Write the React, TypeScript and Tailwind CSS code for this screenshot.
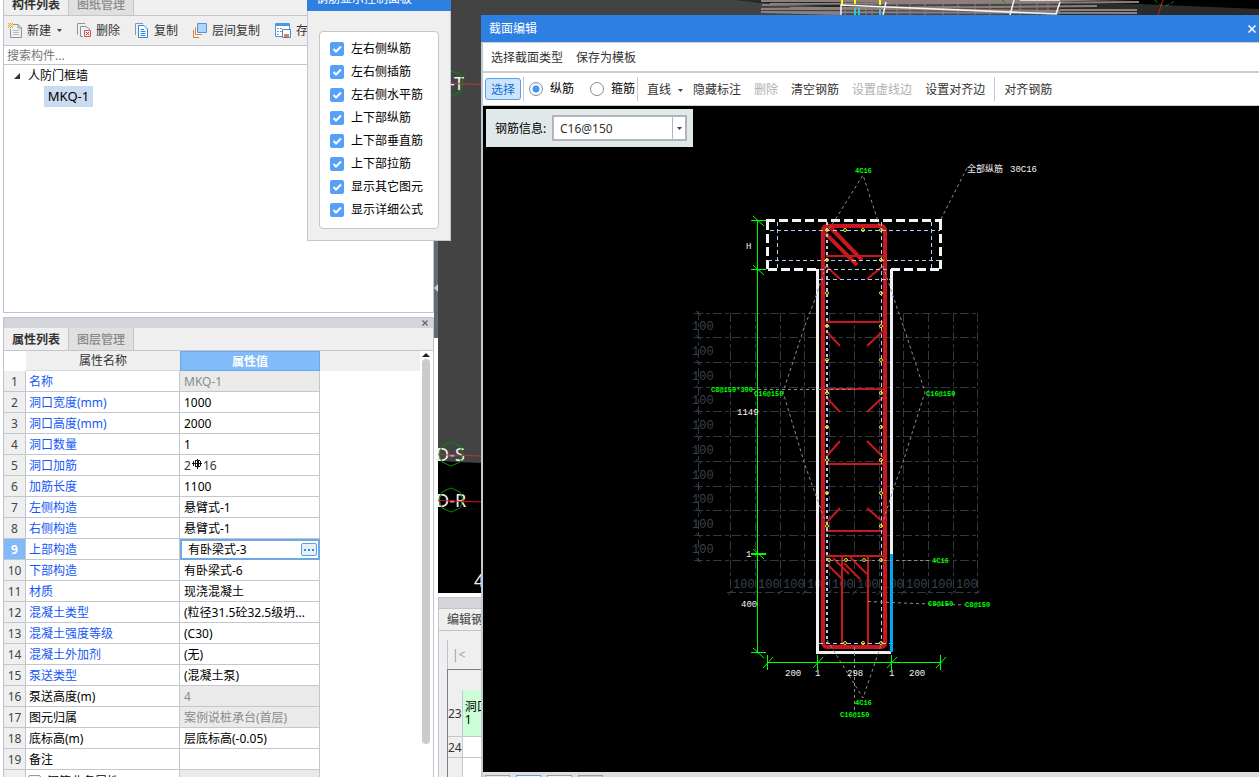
import { useState } from "react";
import type { ReactNode } from "react";
import clsx from "clsx";

interface PropertyRow {
  name: string;
  value: ReactNode;
  common?: boolean;
  readOnly?: boolean;
}

const RebarSymbol = () => (
  <svg className="mx-px inline-block h-[11px] w-[10px] align-baseline" viewBox="0 0 10 11" fill="none" stroke="#111" aria-hidden="true">
    <path d="M2.5 1.5H7.5M2.5 7.5H7.5M1.5 2V7M8.5 2V7M5 0V10M0 4.5H10M3.5 2V7M6.5 2V7" shapeRendering="crispEdges" />
  </svg>
);

const properties: PropertyRow[] = [
  { name: "名称", value: "MKQ-1", common: true, readOnly: true },
  { name: "洞口宽度(mm)", value: "1000", common: true },
  { name: "洞口高度(mm)", value: "2000", common: true },
  { name: "洞口数量", value: "1", common: true },
  { name: "洞口加筋", value: <span className="text-[#333]">2<RebarSymbol />16</span>, common: true },
  { name: "加筋长度", value: "1100", common: true },
  { name: "左侧构造", value: "悬臂式-1", common: true },
  { name: "右侧构造", value: "悬臂式-1", common: true },
  { name: "上部构造", value: "有卧梁式-3", common: true },
  { name: "下部构造", value: "有卧梁式-6", common: true },
  { name: "材质", value: "现浇混凝土", common: true },
  { name: "混凝土类型", value: "(粒径31.5砼32.5级坍...", common: true },
  { name: "混凝土强度等级", value: "(C30)", common: true },
  { name: "混凝土外加剂", value: "(无)", common: true },
  { name: "泵送类型", value: "(混凝土泵)", common: true },
  { name: "泵送高度(m)", value: "4", readOnly: true },
  { name: "图元归属", value: "案例说桩承台(首层)", readOnly: true },
  { name: "底标高(m)", value: "层底标高(-0.05)" },
  { name: "备注", value: "" },
];

const displayOptions = [
  "左右侧纵筋",
  "左右侧插筋",
  "左右侧水平筋",
  "上下部纵筋",
  "上下部垂直筋",
  "上下部拉筋",
  "显示其它图元",
  "显示详细公式",
];

/* ---------- Left toolbar icons ---------- */

const NewIcon = () => (
  <svg className="h-[15px] w-[14px]" viewBox="0 0 14 15" fill="none" aria-hidden="true">
    <path d="M5 1.5H10L13.5 5V14.5H2.5V6" stroke="#8a959c" />
    <path d="M10 1.5V5H13.5" stroke="#8a959c" />
    <path d="M5 7.5H11M5 9.5H11M5 11.5H11" stroke="#b7bfc5" />
    <path d="M0 0.5H1M2 0.5H3M4 0.5H5M1 1.5H2M3 1.5H4M0 2.5H1M2 2.5H3M4 2.5H5M1 3.5H2M3 3.5H4M0 4.5H1M2 4.5H3M4 4.5H5" stroke="#f0a020" />
  </svg>
);

const DeleteIcon = () => (
  <svg className="h-[15px] w-[14px]" viewBox="0 0 14 15" fill="none" aria-hidden="true">
    <path d="M0.5 11.5V0.5H8" stroke="#8a959c" />
    <path d="M6 13.5H3.5V3.5H9L12.5 6V7" stroke="#8a959c" />
    <path d="M7.5 7.5H13.5V13.5H7.5Z" stroke="#d9534f" />
    <path d="M9 9L12 12M12 9L9 12" stroke="#d02f2f" />
  </svg>
);

const CopyIcon = () => (
  <svg className="h-[15px] w-[14px]" viewBox="0 0 14 15" fill="none" aria-hidden="true">
    <path d="M0.5 12V0.5H8" stroke="#8a959c" />
    <path d="M3.5 2.5H9L12.5 6V14.5H3.5Z" stroke="#2e86e0" fill="#fff" />
    <path d="M5.5 6.5H9M5.5 8.5H10.5M5.5 10.5H10.5M5.5 12.5H10.5" stroke="#2e86e0" />
  </svg>
);

const LayerCopyIcon = () => (
  <svg className="h-[15px] w-[14px]" viewBox="0 0 14 15" fill="none" aria-hidden="true">
    <path d="M4.5 0.5H13.5V9.5H4.5Z" stroke="#4a97e8" fill="#b3d4fa" />
    <path d="M3 4.5H2.5V11.5H9" stroke="#e0893c" />
    <path d="M0.5 7V14.5H6" stroke="#e0793c" />
  </svg>
);

const SaveIcon = () => (
  <svg className="h-[15px] w-[16px]" viewBox="0 0 16 15" fill="none" aria-hidden="true">
    <path d="M0.5 0.5H14.5V13.5H0.5Z" fill="#fff" stroke="#4a97e8" />
    <path d="M0 1.5H15M0 2.5H15" stroke="#4a97e8" />
    <path d="M2 5.5H4M5 5.5H7M2 8.5H4M5 8.5H7M2 11.5H4" stroke="#8a959c" />
    <path d="M7.5 6.5H15.5V14.5H7.5Z" fill="#fff" stroke="#4a86c8" />
    <path d="M9 11H14V14H9Z" fill="#e8813c" />
  </svg>
);

const Caret = ({ className }: { className?: string }) => (
  <svg className={clsx("h-[3px] w-[5px]", className)} viewBox="0 0 5 3" aria-hidden="true">
    <path d="M0 0H5L2.5 3Z" fill="#444" />
  </svg>
);

function Tabs({ items }: { items: string[] }) {
  return (
    <div className="flex items-end overflow-hidden border-b border-[#c3c6cc] bg-[#efefef]">
      {items.map((item, i) => (
        <button
          key={item}
          className={clsx(
            "h-[22px] w-[65px] shrink-0 border-r border-[#c3c6cc] pt-[2px] text-center leading-[20px]",
            i === 0 ? "font-bold text-[#333]" : "bg-[#e0e0e0] font-medium text-[#8a8a8a]"
          )}
        >
          {item}
        </button>
      ))}
    </div>
  );
}

function ComponentList() {
  return (
    <section className="flex h-[313px] shrink-0 flex-col border-x border-b border-[#c0c4cc] bg-white">
      <div className="flex h-[16px] shrink-0 flex-col justify-end overflow-hidden">
        <Tabs items={["构件列表", "图纸管理"]} />
      </div>
      <div className="flex h-[30px] shrink-0 items-center gap-[15px] border-b border-[#c0c4cc] bg-[#efefef] pl-1 text-[#333]">
        <button className="flex items-center gap-[5px] whitespace-nowrap">
          <NewIcon />
          新建
          <Caret className="ml-px" />
        </button>
        <button className="flex items-center gap-[5px] whitespace-nowrap"><DeleteIcon />删除</button>
        <button className="flex items-center gap-[5px] whitespace-nowrap"><CopyIcon />复制</button>
        <button className="flex items-center gap-[5px] whitespace-nowrap"><LayerCopyIcon />层间复制</button>
        <button className="flex items-center gap-[5px] whitespace-nowrap"><SaveIcon />存档</button>
      </div>
      <input
        aria-label="搜索构件"
        placeholder="搜索构件..."
        className="h-[19px] shrink-0 border-b border-[#c0c4cc] px-[3px] outline-none placeholder:text-[#777]"
      />
      <ul className="leading-[21px] text-black">
        <li>
          <div className="flex items-center gap-2 pl-[10px]">
            <svg className="h-[6px] w-[6px]" viewBox="0 0 6 6" aria-hidden="true">
              <path d="M6 0V6H0Z" fill="#333" />
            </svg>
            人防门框墙
          </div>
          <div className="ml-10 w-[49px] bg-[#c9daf1] text-center text-[13px]">MKQ-1</div>
        </li>
      </ul>
    </section>
  );
}

function PropertyTable() {
  const active = 8;
  return (
    <table className="w-[416px] shrink-0 table-fixed border-separate border-spacing-0 self-start">
      <colgroup>
        <col className="w-[22px]" />
        <col className="w-[154px]" />
        <col className="w-[140px]" />
        <col className="w-[100px]" />
      </colgroup>
      <thead>
        <tr className="h-[20px]">
          <th className="bg-white p-0" aria-label="序号" />
          <th className="border-b border-[#d5d8dc] bg-[#efefef] p-0 pt-px leading-[18px] font-normal text-[#333]">属性名称</th>
          <th className="border border-[#6ca9ec] bg-[#82bbfa] p-0 pt-px leading-[17px] font-bold text-white">属性值</th>
          <th className="bg-[#efefef] p-0" aria-label="附加" />
        </tr>
      </thead>
      <tbody>
        {properties.map((row, i) => (
          <tr key={row.name} className="h-[21px] leading-[18px] whitespace-nowrap">
            <td
              className={clsx(
                "border-r border-b border-[#c3c6cc] p-0 pt-[2px] text-center",
                i === active ? "bg-[#82b9f9] font-bold text-white" : "bg-[#efefef] text-[#444]"
              )}
            >
              {i + 1}
            </td>
            <td className={clsx("border-r border-b border-[#c3c6cc] p-0 pt-[2px] pl-[3px]", row.common ? "text-[#1458f5]" : "text-black")}>
              {row.name}
            </td>
            {i === active ? (
              <td className="border-2 border-[#6ca7e6] p-0">
                <div className="flex h-[17px] items-center">
                  <input
                    aria-label={row.name}
                    defaultValue={row.value as string}
                    className="h-[17px] min-w-0 flex-1 pt-px pl-[6px] text-black outline-none"
                  />
                  <button
                    aria-label="更多"
                    className="mr-px flex h-[13px] w-[16px] items-center justify-center gap-[2px] rounded-[2px] border border-[#5b9fe0] bg-[#e8f1fb]"
                  >
                    <span className="size-[2px] bg-[#3d88d4]" />
                    <span className="size-[2px] bg-[#3d88d4]" />
                    <span className="size-[2px] bg-[#3d88d4]" />
                  </button>
                </div>
              </td>
            ) : (
              <td
                className={clsx(
                  "overflow-hidden border-r border-b border-[#c3c6cc] p-0 pt-[2px] pl-1",
                  row.readOnly ? "bg-[#eaeaea] text-[#8a8a8a]" : "text-black"
                )}
              >
                {row.value}
              </td>
            )}
            <td className="p-0" />
          </tr>
        ))}
        <tr className="h-[21px] leading-[18px]">
          <td className="border-r border-[#c3c6cc] bg-[#efefef] p-0 pt-[2px] text-center text-[#444]">20</td>
          <td className="border-r border-[#c3c6cc] p-0 pt-[2px]">
            <button className="flex items-center gap-[6px] pl-[2px] text-black">
              <span className="flex size-[13px] items-center justify-center rounded-[2px] border border-[#999] bg-[#f4f4f4] leading-[10px]">+</span>
              钢筋业务属性
            </button>
          </td>
          <td className="border-r border-[#c3c6cc] bg-[#eaeaea] p-0" />
          <td className="p-0" />
        </tr>
      </tbody>
    </table>
  );
}

function PropertyPanel() {
  return (
    <section className="mt-1 flex min-h-0 flex-1 flex-col border-x border-[#c0c4cc] bg-white">
      <header className="flex h-[11px] shrink-0 items-center justify-end border-t border-[#c0c4cc] bg-[#d4d5da] pr-[5px]">
        <button aria-label="关闭">
          <svg className="h-[6px] w-[6px]" viewBox="0 0 6 6" aria-hidden="true">
            <path d="M0.5 0.5L5.5 5.5M5.5 0.5L0.5 5.5" stroke="#666" strokeWidth="1.3" />
          </svg>
        </button>
      </header>
      <Tabs items={["属性列表", "图层管理"]} />
      <div className="flex min-h-0 flex-1 overflow-hidden">
        <PropertyTable />
        <div className="flex flex-1 flex-col items-center gap-[2px] pt-[2px] pr-[2px]">
          <svg className="h-[4px] w-[8px]" viewBox="0 0 8 4" aria-hidden="true">
            <path d="M0 4L4 0L8 4Z" fill="#222" />
          </svg>
          <div className="h-[385px] w-2 rounded-full bg-[#cbcbcb]" />
        </div>
      </div>
    </section>
  );
}

/* 3D view behind the dialogs, drawn in window coordinates */
function SceneView() {
  return (
    <svg className="size-full bg-[#434343]" aria-hidden="true">
      <g transform="translate(-438 0)">
        <path d="M438 461L482 463V700H438Z" fill="#000" />
        <path d="M960 0H1259V15H960Z" fill="#2b2b2b" />
        <path d="M1065 0H1259V9L1139 4L1065 2Z" fill="#000" />
        <path d="M735 0L840 2V8L761 3Z" fill="#242424" />
        <path d="M840 0H1060V15H840Z" fill="#4a4442" />
        <g stroke="#8c807d" strokeWidth="2">
          <path d="M761 1H1060M762 5L1137 -1M770 4L1139 2M761 9L960 7M765 12L1137 13M808 9L1097 6M790 8L1060 11M761 12L840 14M1060 10H1137" />
          <path d="M845 0V15M866 0V15M872 0V15M897 0V15M910 0V15M925 0V15M943 0V15M958 0V15M975 0V15M990 0V15M1020 0V15M1037 0V15M1048 0V15" strokeWidth="1" />
        </g>
        <path d="M842 0V5M855 0V4M880 0V5" stroke="#ffff00" strokeWidth="2" />
        <path d="M855 8V15M859 8V15M880 9V15" stroke="#2ad0c8" strokeWidth="2" />
        <path d="M841 15V5L1057 14M886 2L883 15M1014 0L1010 15M1060 2L1056 14M1020 0H1060" fill="none" stroke="#f5f5f5" strokeWidth="1.5" />
        <path d="M1155 0Q1158 5 1165 6Q1172 4 1175 0M1002 0L1006 3" fill="none" stroke="#118a11" strokeDasharray="4 2" />
        <path d="M1163 0L1158 15" stroke="#d01818" />
        <g fill="#f0f0f0" fontFamily="Noto Sans, sans-serif" fontSize="18">
          <text x="449" y="90">-T</text>
          <text x="436" y="461">D-S</text>
          <text x="436" y="507">D-R</text>
          <text x="474" y="587">4</text>
        </g>
        <g fill="none" stroke="#0c8a0c">
          <path d="M451 71L460 74L463 83L460 92L451 96" />
          <path d="M451 442L460 446L463 454L460 462L451 466L442 462L439 454L442 446Z" />
          <path d="M451 488L460 492L463 500L460 508L451 512L442 508L439 500L442 492Z" />
        </g>
        <path d="M451 83.5L482 84.5M438 454.5L482 456" stroke="#b03838" />
        <path d="M438 500.5L482 502" stroke="#e01010" />
      </g>
    </svg>
  );
}

function RebarEditor() {
  return (
    <section className="flex h-[180px] shrink-0 flex-col border-l border-[#c0c4cc] bg-[#efefef]">
      <header className="h-[12px] shrink-0 border-y border-[#c0c4cc] bg-[#d4d5da]" />
      <h2 className="h-[22px] shrink-0 border-b border-[#c0c4cc] pl-2 leading-[22px] font-medium text-[#555]">编辑钢筋</h2>
      <div className="mt-[9px] ml-2 flex min-h-0 flex-1 flex-col">
        <div className="flex h-[29px] shrink-0 items-center gap-4 border-l border-[#c0c4cc] pl-1 text-[#999]">
          <button>|&lt;</button>
          <button>&lt;</button>
        </div>
        <table className="table-fixed border-separate border-spacing-0 border-t border-l border-[#7a7e8a] bg-white">
          <colgroup>
            <col className="w-[14px]" />
            <col />
          </colgroup>
          <thead>
            <tr className="h-[20px] bg-[#efefef]">
              <th className="p-0" aria-label="序号" />
              <th className="p-0" aria-label="筋号" />
            </tr>
          </thead>
          <tbody className="text-[#333]">
            <tr className="h-[47px]">
              <td className="border-r border-b border-[#c3c6cc] bg-[#efefef] p-0 pt-[2px]">23</td>
              <td className="border-b border-[#c3c6cc] bg-[#ccffd8] p-0 pl-[2px] leading-[13px] text-black">
                <div>洞口加强筋</div>
                <div>1</div>
              </td>
            </tr>
            <tr className="h-[21px]">
              <td className="border-r border-b border-[#c3c6cc] bg-[#efefef] p-0 pt-[2px]">24</td>
              <td className="border-b border-[#c3c6cc] p-0" />
            </tr>
            <tr className="h-[20px]">
              <td className="border-r border-[#c3c6cc] bg-[#efefef] p-0" />
              <td className="p-0" />
            </tr>
          </tbody>
        </table>
      </div>
    </section>
  );
}

function DisplayPanel() {
  return (
    <aside className="absolute -top-[15px] left-[307px] w-[144px] border border-[#c0c6d2] bg-[#efefef]">
      <h2 className="-mx-px -mt-px h-[26px] bg-[#2d80e2] pl-[9px] leading-[27px] text-white">钢筋显示控制面板</h2>
      <div className="mx-[11px] mt-5 mb-[11px] rounded-[4px] border border-[#c3c6cc] bg-white pt-[5px] pb-[7px] pl-[10px]">
        {displayOptions.map((option) => (
          <label key={option} className="flex h-[23px] items-center gap-[7px] text-black">
            <span className="relative flex size-[14px]">
              <input type="checkbox" defaultChecked className="peer size-[14px] appearance-none rounded-[2px] border border-[#56a0f8] checked:bg-[#56a0f8]" />
              <svg className="pointer-events-none absolute inset-0 hidden peer-checked:block" viewBox="0 0 14 14" fill="none" aria-hidden="true">
                <path d="M3.5 7L6 9.5L11 4.5" stroke="#fff" strokeWidth="2" />
              </svg>
            </span>
            <span className="pt-px">{option}</span>
          </label>
        ))}
      </div>
    </aside>
  );
}

/* ---------- Section drawing ---------- */

const gridX = [730, 755, 780, 804, 829, 854, 879, 903, 928, 953, 977];
const gridY = [313, 337, 362, 387, 411, 436, 461, 486, 510, 535, 560];
const barY = [260, 293, 326, 360, 393, 427, 460, 493, 526];
const bars: [number, number][] = [
  [827, 230], [845, 230], [863, 230], [881, 230],
  ...barY.flatMap((y): [number, number][] => [[827, y], [881, y]]),
  [829, 560], [846, 560], [864, 560], [881, 560],
  [845, 643], [863, 643], [881, 643],
];

const dimLabels: [number, number, string][] = [
  [746, 249, "H"],
  [737, 415, "1149"],
  [746, 557, "1"],
  [741, 607, "400"],
  [785, 676, "200"],
  [815, 676, "1"],
  [847, 676, "298"],
  [889, 676, "1"],
  [909, 676, "200"],
  [967, 172, "全部纵筋"],
  [1010, 172, "30C16"],
];

const barLabels: [number, number, string][] = [
  [855, 173, "4C16"],
  [711, 392, "C8@150*300"],
  [754, 396, "C16@150"],
  [926, 396, "C16@150"],
  [932, 563, "4C16"],
  [928, 606, "C8@150"],
  [965, 607, "C8@150"],
  [855, 705, "4C16"],
  [840, 717, "C16@150"],
];

function SectionDrawing() {
  return (
    <svg className="size-full" role="img" aria-label="截面图">
      <g transform="translate(-483 -106)" fill="none">
        {/* reference grid */}
        <g stroke="#303843" strokeDasharray="9 3 4 3" shapeRendering="crispEdges">
          {gridX.map((x) => <path key={x} d={`M${x}.5 313V592`} />)}
          {gridY.map((y) => <path key={y} d={`M694 ${y}.5H978`} />)}
          <path d="M698.5 311V562M727 592.5H979" />
        </g>
        <g stroke="#303843">
          {gridX.map((x) => <path key={x} d={`M${x - 2} 595L${x + 3} 590`} />)}
          {gridY.map((y) => <path key={y} d={`M696 ${y - 2}L701 ${y + 3}`} />)}
        </g>
        <g fill="#39424e" fontFamily="Liberation Mono, monospace" fontSize="12">
          {gridY.slice(1).map((y) => <text key={y} x="692" y={y - 7}>100</text>)}
          {gridX.slice(0, -1).map((x) => <text key={x} x={x + 3} y="588">100</text>)}
        </g>

        {/* dimensions */}
        <g stroke="#00ff00">
          <path d="M757.5 220V652M751 220.5H766M751 269.5H766M751 652.5H766M767 662.5H941" shapeRendering="crispEdges" />
          <path d="M751 554H766" strokeWidth="2" shapeRendering="crispEdges" />
          <path d="M767.5 655V670M817.5 655V670M891.5 655V670M940.5 655V670" shapeRendering="crispEdges" />
          <path d="M753 216L764 226M753 265L764 275M753 549L764 559M753 648L764 658" />
          <path d="M763 668L773 657M813 668L823 657M887 668L897 657M936 668L946 657" />
        </g>

        {/* concrete outline */}
        <g shapeRendering="crispEdges" strokeWidth="3">
          <path d="M766 220.5H942M767.5 221V270M940.5 221V270M768 269.5H817M891 269.5H941" stroke="#f5f5f5" strokeDasharray="9 4" />
          <path d="M817.5 269V652.5H891" stroke="#f0f0f0" />
          <path d="M891.5 269V554" stroke="#f0f0f0" />
          <path d="M891.5 554V652" stroke="#00a8f0" />
        </g>

        {/* stirrups and ties */}
        <g stroke="#c9171e">
          <rect x="823" y="226" width="62" height="421" rx="4" strokeWidth="4" />
          <path d="M825 233L857 265M831 228L862 260" strokeWidth="4" />
          <path d="M826 256H884M826 322H884M826 389H884M826 464H884M826 531H884M826 556H884M842 557V646M868 557V646" strokeWidth="2" shapeRendering="crispEdges" />
          <path
            d="M826 266L840 279M883 266L867 279M826 331L840 346M883 331L867 346M826 397L840 412M883 397L867 412M826 457L840 441M883 457L867 441M826 523L840 508M883 522L867 508M827 564L842 579M833 558L849 574M844 563L860 579M850 557L867 574"
            strokeWidth="2"
          />
        </g>

        {/* cover lines */}
        <g stroke="#a9cdf5" strokeDasharray="4 3" shapeRendering="crispEdges">
          <path d="M770 230.5H940M768 260.5H940M777.5 222V268M931.5 222V268M820 269.5H890M819 279.5H890M819 643.5H890M881.5 222V643" />
          <path d="M827 222V643" strokeWidth="2" strokeDasharray="3 3" />
        </g>

        <g stroke="#f5e92a">
          {bars.map(([x, y]) => <circle key={`${x}-${y}`} cx={x} cy={y} r="1.5" />)}
        </g>

        {/* leaders */}
        <g stroke="#8f8f8f" strokeDasharray="3 3">
          <path d="M829 229L835 220L863 175L876 215L881 230M941 219L967 168" />
          <path d="M826 266L814 302L804 328L793 362L783 392L805 465L815 493L826 523" />
          <path d="M883 266L895 302L904 328L925 392L903 462L893 490L883 522" />
          <path d="M752 389.5H855M830 560.5H930M868 601.5L915 603.5L965 605" />
          <path d="M827 640L863 698L881 645M854.5 647V711" />
        </g>

        <g fill="#f5f5f5" fontFamily="Liberation Mono, Noto Sans CJK SC, monospace" fontSize="9">
          {dimLabels.map(([x, y, text]) => <text key={`${x}-${y}`} x={x} y={y}>{text}</text>)}
        </g>
        <g fill="#00ff00" fontFamily="Liberation Mono, monospace" fontSize="7" fontWeight="bold">
          {barLabels.map(([x, y, text]) => <text key={`${x}-${y}`} x={x} y={y}>{text}</text>)}
        </g>
      </g>
    </svg>
  );
}

const Divider = () => <span className="h-6 w-px shrink-0 bg-[#c6c9cd]" />;

function ToolButton({ children, disabled }: { children: ReactNode; disabled?: boolean }) {
  return (
    <button
      disabled={disabled}
      className="flex h-[22px] items-center rounded-[3px] px-[6px] pt-[2px] whitespace-nowrap text-[#333] disabled:text-[#b0b0b0]"
    >
      {children}
    </button>
  );
}

function SectionDialog() {
  const [barType, setBarType] = useState("纵筋");

  return (
    <section className="absolute top-[15px] right-0 bottom-0 left-[481px] flex flex-col border-l-2 border-[#c3c9d1] bg-white">
      <header className="-ml-[2px] flex h-[27px] shrink-0 items-center justify-between bg-[#2d80e2] pr-[3px] pl-2 text-white">
        <h1 className="pt-px">截面编辑</h1>
        <button aria-label="关闭">
          <svg className="size-2" viewBox="0 0 8 8" aria-hidden="true">
            <path d="M0.5 0.5L7.5 7.5M7.5 0.5L0.5 7.5" stroke="#fff" strokeWidth="1.5" />
          </svg>
        </button>
      </header>

      <div className="flex h-[31px] shrink-0 items-center gap-px border-t border-b-2 border-[#c9ced3] pl-[2px]">
        <ToolButton>选择截面类型</ToolButton>
        <ToolButton>保存为模板</ToolButton>
      </div>

      <div className="flex h-[33px] shrink-0 items-center border-b border-[#c9ced3] pl-[2px]">
        <button className="h-[22px] rounded-[3px] border border-[#5aa2e8] bg-[#cce5fc] px-[5px] pt-px whitespace-nowrap text-[#0f6fd8]">选择</button>
        <span className="ml-[2px] flex"><Divider /></span>
        <div className="flex gap-4 pr-[2px] pl-[5px]">
          {["纵筋", "箍筋"].map((type) => (
            <label key={type} className="flex items-center gap-[7px] whitespace-nowrap text-black">
              <input
                type="radio"
                name="barType"
                checked={barType === type}
                onChange={() => setBarType(type)}
                className="size-[14px] appearance-none rounded-full border border-[#8a8a8a] bg-white checked:border-[#7a8a9a] checked:bg-[radial-gradient(#3f97f5_3px,#fff_4px)]"
              />
              {type}
            </label>
          ))}
        </div>
        <Divider />
        <div className="flex gap-px px-[3px]">
          <ToolButton>
            直线
            <Caret className="-mr-[3px] ml-[7px]" />
          </ToolButton>
          <ToolButton>隐藏标注</ToolButton>
          <ToolButton disabled>删除</ToolButton>
          <ToolButton>清空钢筋</ToolButton>
          <ToolButton disabled>设置虚线边</ToolButton>
          <ToolButton>设置对齐边</ToolButton>
        </div>
        <Divider />
        <div className="flex px-[3px]">
          <ToolButton>对齐钢筋</ToolButton>
        </div>
      </div>

      <div className="relative min-h-0 flex-1 overflow-hidden bg-black">
        <SectionDrawing />
        <form className="absolute top-[3px] left-[3px] flex h-[38px] items-center bg-[#e1e8e9] pr-[6px] pl-[9px]">
          <label htmlFor="bar-info" className="w-[57px] pt-[2px] text-black">钢筋信息:</label>
          <div className="relative">
            <select id="bar-info" className="h-[26px] w-[135px] appearance-none rounded-none border-2 border-[#b2b5b7] bg-white pt-[2px] pl-[6px] text-[12px] text-[#333] outline-none">
              <option>C16@150</option>
            </select>
            <span className="pointer-events-none absolute inset-y-0 right-[2px] flex w-[13px] items-center justify-center border-l border-[#b2b5b7]">
              <Caret />
            </span>
          </div>
        </form>
      </div>

      <footer className="flex h-[5px] shrink-0 gap-[6px] overflow-hidden bg-[#dddee1] pt-[3px] pl-[2px]">
        <button aria-label="正交" className="h-5 w-[25px] border border-[#9a9da1] bg-[#e6e6e8]" />
        <button aria-label="捕捉" className="h-5 w-[25px] border border-[#5aa2e8] bg-[#f2f7fc]" />
        <button aria-label="网格" className="h-5 w-[25px] border border-[#9a9da1] bg-[#f4f4f4]" />
        <button aria-label="动态输入" className="h-5 w-[25px] border border-[#9a9da1] bg-[#d0d1d4]" />
      </footer>
    </section>
  );
}

export default function App() {
  return (
    <main className="relative flex h-screen overflow-hidden bg-white font-['Noto_Sans','Noto_Sans_CJK_SC',sans-serif] text-[12px] leading-[16px]">
      <div className="ml-[3px] flex w-[431px] shrink-0 flex-col">
        <ComponentList />
        <PropertyPanel />
      </div>
      <div className="flex h-[338px] w-1 shrink-0 items-end bg-[#5f6b78] pb-[46px]">
        <svg className="h-2 w-1" viewBox="0 0 4 8" aria-hidden="true">
          <path d="M4 0V8L0 4Z" fill="#c9d0d8" />
        </svg>
      </div>
      <div className="flex min-w-0 flex-1 flex-col">
        <div className="mb-1 min-h-0 flex-1">
          <SceneView />
        </div>
        <RebarEditor />
      </div>
      <DisplayPanel />
      <SectionDialog />
    </main>
  );
}
